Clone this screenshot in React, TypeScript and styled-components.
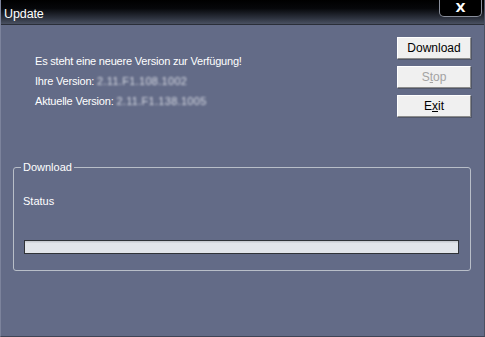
import React from 'react';
import styled, { createGlobalStyle } from 'styled-components';

const GlobalStyle = createGlobalStyle`
    html, body {
        margin: 0;
        padding: 0;
        background: #636b87;
    }
    body {
        font-family: 'Liberation Sans', Arial, sans-serif;
    }
`;

const Window = styled.div`
    width: 485px;
    height: 337px;
    box-sizing: border-box;
    display: flex;
    flex-direction: column;
    background-color: #636b87;
    border-left: 1px solid #7c839c;
    border-right: 1px solid #4b5163;
    border-bottom: 1px solid #3f4556;
    overflow: hidden;
`;

const TitleBar = styled.div`
    height: 24px;
    flex-shrink: 0;
    display: flex;
    justify-content: space-between;
    align-items: flex-start;
    background: linear-gradient(#000 0%, #06070a 35%, #2c313d 75%, #4a5162 100%);
    border-bottom: 1px solid #2a2e38;
`;

const Title = styled.span`
    color: #fff;
    font-family: 'Liberation Sans', Arial, sans-serif;
    font-size: 12.5px;
    line-height: 24px;
    padding: 2px 0 0 3px;
    letter-spacing: -0.1px;
`;

const CloseButton = styled.button`
    width: 43px;
    height: 18px;
    margin: -1px 2px 0 0;
    padding: 0;
    background: #000;
    border: 1px solid #8a8f9c;
    border-top: none;
    border-radius: 0 0 5px 5px;
    color: #fff;
    font-family: 'DejaVu Sans', sans-serif;
    font-weight: bold;
    font-size: 13px;
    line-height: 16px;
`;

const Body = styled.div`
    flex: 1;
    display: flex;
    flex-direction: column;
    padding: 12px 13px 0 12px;
`;

const TopRow = styled.div`
    display: flex;
    justify-content: space-between;
`;

const Info = styled.div`
    display: flex;
    flex-direction: column;
    padding: 14px 0 0 22px;
    color: #fff;
    font-size: 11px;
    line-height: 20px;
    letter-spacing: -0.2px;
`;

const Blurred = styled.span`
    color: #d8dbe4;
    filter: blur(1.3px);
    letter-spacing: 0.3px;
`;

const ButtonColumn = styled.div`
    display: flex;
    flex-direction: column;
    gap: 7px;
`;

const DialogButton = styled.button<{ $disabled?: boolean }>`
    width: 74px;
    height: 22px;
    padding: 0;
    background: #f0f0f0;
    border: 1px solid #fff;
    border-right-color: #8c8c8c;
    border-bottom-color: #8c8c8c;
    box-shadow: 1px 1px 0 #505668;
    font-family: 'Liberation Sans', Arial, sans-serif;
    font-size: 12px;
    color: ${p => (p.$disabled ? '#a3a3a3' : '#000')};
`;

const GroupBox = styled.fieldset`
    margin: 44px 0 0 0;
    padding: 20px 11px 16px 10px;
    border: 1px solid #b8bec8;
    border-radius: 3px;
    display: flex;
    flex-direction: column;
`;

const Legend = styled.legend`
    color: #fff;
    font-size: 11px;
    padding: 0 2px;
    margin-left: -3px;
`;

const Status = styled.div`
    color: #fff;
    font-size: 11px;
    line-height: 16px;
    margin-left: -1px;
    padding-bottom: 31px;
`;

const ProgressBar = styled.div`
    height: 14px;
    box-sizing: border-box;
    border: 1px solid #303338;
    background: linear-gradient(#c9ccd2 0px, #c9ccd2 1px, #e2e5ea 2px, #e2e5ea 100%);
`;

const App: React.FC = () => {
    return (
        <>
            <GlobalStyle />
            <Window>
                <TitleBar>
                    <Title>Update</Title>
                    <CloseButton>X</CloseButton>
                </TitleBar>
                <Body>
                    <TopRow>
                        <Info>
                            <span>Es steht eine neuere Version zur Verfügung!</span>
                            <span>
                                Ihre Version: <Blurred>2.11.F1.108.1002</Blurred>
                            </span>
                            <span>
                                Aktuelle Version: <Blurred>2.11.F1.138.1005</Blurred>
                            </span>
                        </Info>
                        <ButtonColumn>
                            <DialogButton>Download</DialogButton>
                            <DialogButton $disabled>
                                S<u>t</u>op
                            </DialogButton>
                            <DialogButton>
                                E<u>x</u>it
                            </DialogButton>
                        </ButtonColumn>
                    </TopRow>
                    <GroupBox>
                        <Legend>Download</Legend>
                        <Status>Status</Status>
                        <ProgressBar />
                    </GroupBox>
                </Body>
            </Window>
        </>
    );
};

export default App;
